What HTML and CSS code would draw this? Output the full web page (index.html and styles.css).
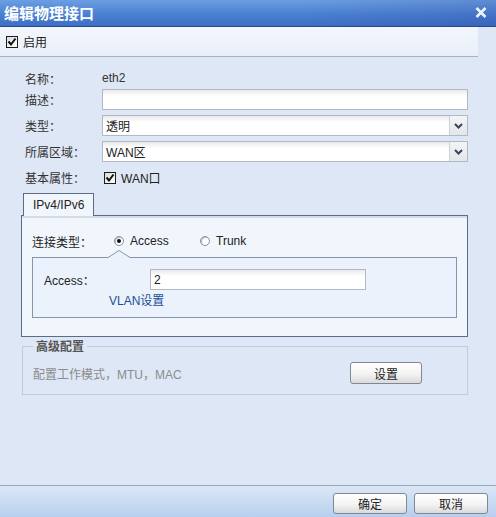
FILE: index.html
```html
<!DOCTYPE html>
<html lang="zh-CN">
<head>
    <meta charset="UTF-8">
    <title>编辑物理接口</title>
    <link rel="stylesheet" href="styles.css">
</head>
<body>

<div class="titlebar">
    <span class="title">编辑物理接口</span>
    <svg class="close" width="12" height="11" viewBox="0 0 12 11"><path d="M1.5 1 L10.5 10 M10.5 1 L1.5 10" stroke="#eef3fb" stroke-width="2.6"/></svg>
</div>

<div class="enable-bar">
    <label class="check">
        <span class="box"><svg width="10" height="10" viewBox="0 0 10 10"><path d="M1.5 4.5 L4 7.5 L8.5 1.5" stroke="#111" stroke-width="2" fill="none"/></svg></span>
        启用
    </label>
</div>

<div class="content">
    <div class="row row-name">
        <span class="label">名称：</span>
        <span class="value">eth2</span>
    </div>
    <div class="row">
        <span class="label">描述：</span>
        <div class="input"></div>
    </div>
    <div class="row">
        <span class="label">类型：</span>
        <div class="input select"><span class="text">透明</span><span class="arrow"><svg width="9" height="6" viewBox="0 0 9 6"><path d="M1 1 L4.5 4.5 L8 1" stroke="#38435e" stroke-width="2" fill="none"/></svg></span></div>
    </div>
    <div class="row">
        <span class="label">所属区域：</span>
        <div class="input select"><span class="text">WAN区</span><span class="arrow"><svg width="9" height="6" viewBox="0 0 9 6"><path d="M1 1 L4.5 4.5 L8 1" stroke="#38435e" stroke-width="2" fill="none"/></svg></span></div>
    </div>
    <div class="row">
        <span class="label">基本属性：</span>
        <label class="check">
            <span class="box"><svg width="10" height="10" viewBox="0 0 10 10"><path d="M1.5 4.5 L4 7.5 L8.5 1.5" stroke="#111" stroke-width="2" fill="none"/></svg></span>
            WAN口
        </label>
    </div>

    <div class="tabs">
        <div class="tab">IPv4/IPv6</div>
    </div>
    <div class="tab-panel">
        <div class="radio-row">
            <span class="radio-label">连接类型：</span>
            <span class="radio checked"><span class="dot"></span></span>
            <span class="radio-text">Access</span>
            <span class="radio"></span>
            <span class="radio-text">Trunk</span>
        </div>
        <div class="sub-box">
            <svg class="notch" width="22" height="8" viewBox="0 0 22 8"><path d="M0 8 L0 7.5 L11 0.5 L22 7.5 L22 8 Z" fill="#ebf2fc"/><path d="M0 7.5 L11 0.5 L22 7.5" stroke="#8595ad" fill="none"/></svg>
            <div class="sub-row">
                <span class="sub-label">Access：</span>
                <div class="input small">2</div>
            </div>
            <a class="link">VLAN设置</a>
        </div>
    </div>

    <fieldset class="advanced">
        <legend>高级配置</legend>
        <div class="adv-row">
            <span class="hint">配置工作模式，MTU，MAC</span>
            <button class="btn btn-set">设置</button>
        </div>
    </fieldset>
</div>

<div class="footer">
    <button class="btn">确定</button>
    <button class="btn">取消</button>
</div>

</body>
</html>
```

FILE: styles.css
```css
body {
    margin: 0;
    width: 496px;
    height: 517px;
    display: flex;
    flex-direction: column;
    background: #dee7f5;
    font-family: "Liberation Sans", "Noto Sans CJK SC", sans-serif;
    font-size: 12px;
    color: #333;
    overflow: hidden;
}
.titlebar {
    height: 26px;
    display: flex;
    align-items: center;
    justify-content: space-between;
    padding: 0 6px 0 4px;
    background: linear-gradient(90deg, rgba(255,255,255,0) 60%, rgba(40,50,140,0.18)), linear-gradient(#6b9fe2, #4a80d2 55%, #3c6fc4);
    border-bottom: 1px solid #27498c;
}
.title {
    color: #fff;
    font-family: "Noto Sans CJK SC", sans-serif;
    font-weight: bold;
    font-size: 15px;
    line-height: 18px;
}
.close {
    margin: -1px 3px 0 0;
}
.enable-bar {
    height: 29px;
    width: 472px;
    display: flex;
    align-items: center;
    padding-left: 6px;
    background: linear-gradient(#f3f6fc, #e9eff9);
    border-bottom: 1px solid #a6b2c6;
}
.check {
    display: flex;
    align-items: center;
    gap: 5px;
    color: #222;
}
.box {
    width: 10px;
    height: 10px;
    border: 1px solid #1d1d1d;
    background: linear-gradient(135deg, #dcdcd6, #fff);
    display: flex;
    align-items: center;
    justify-content: center;
}
.content {
    flex: 1;
    width: 447px;
    padding: 13px 0 0 21px;
}
.row {
    display: flex;
    align-items: center;
    height: 21px;
    margin-bottom: 5px;
}
.row-name {
    height: 16px;
    margin-bottom: 3px;
}
.label {
    width: 77px;
    padding-left: 4px;
    flex-shrink: 0;
    color: #333;
}
.value {
    color: #333;
}
.input {
    flex: 1;
    height: 19px;
    border: 1px solid #b3b9c3;
    background: linear-gradient(#e9e9e9, #fff 6px);
    display: flex;
    align-items: center;
    padding-left: 3px;
    color: #222;
}
.select {
    padding-left: 0;
}
.select .text {
    flex: 1;
    padding-left: 3px;
}
.arrow {
    width: 17px;
    height: 19px;
    border-left: 1px solid #ccd1d8;
    background: linear-gradient(#f3f4f6, #e3e6ea);
    display: flex;
    align-items: center;
    justify-content: center;
}
.row .check {
    margin-left: 2px;
}
.tabs {
    display: flex;
    padding-left: 2px;
}
.tab {
    position: relative;
    z-index: 1;
    height: 22px;
    line-height: 22px;
    padding: 0 9px;
    border: 1px solid #5b6c89;
    border-bottom: none;
    background: #f1f6fd;
    margin-bottom: -1px;
    color: #222;
}
.tab-panel {
    border: 1px solid #5b6c89;
    background: #f1f6fd;
    box-shadow: inset 0 2px 0 #d4dbe6;
    padding: 17px 10px 18px 10px;
}
.radio-row {
    display: flex;
    align-items: center;
    height: 16px;
}
.radio-label {
    width: 82px;
    color: #222;
}
.radio {
    width: 8px;
    height: 8px;
    border: 1px solid #8a8f96;
    border-radius: 50%;
    background: #fff;
    box-shadow: inset 1px 1px 1px #b8bcc2;
    display: flex;
    align-items: center;
    justify-content: center;
    margin-right: 6px;
}
.dot {
    width: 4px;
    height: 4px;
    border-radius: 50%;
    background: #111;
}
.radio-text {
    width: 70px;
    color: #222;
}
.sub-box {
    position: relative;
    margin-top: 8px;
    border: 1px solid #8595ad;
    background: #ebf2fc;
    padding: 11px 11px 8px 11px;
}
.notch {
    position: absolute;
    top: -8px;
    left: 75px;
}
.sub-row {
    display: flex;
    align-items: center;
    height: 21px;
}
.sub-label {
    width: 106px;
    color: #222;
}
.input.small {
    flex: none;
    width: 211px;
}
.link {
    display: block;
    margin: 3px 0 0 65px;
    line-height: 16px;
    color: #1c4f96;
}
.advanced {
    margin: 1px 0 0 1px;
    padding: 8px 10px 10px 10px;
    border: 1px solid #c3cbd8;
    min-width: 0;
}
.advanced legend {
    padding: 0 3px;
    font-weight: bold;
    color: #555;
    font-family: "Noto Sans CJK SC", sans-serif;
    line-height: 16px;
}
.adv-row {
    display: flex;
    align-items: center;
    justify-content: space-between;
    padding-right: 35px;
}
.hint {
    color: #8c8c8c;
}
.btn {
    width: 74px;
    height: 21px;
    border: 1px solid #7f8896;
    border-radius: 3px;
    background: linear-gradient(#fff, #f3f3f3 55%, #dadada);
    font-family: "Noto Sans CJK SC", sans-serif;
    font-size: 12px;
    color: #222;
    padding: 0;
}
.btn-set {
    width: 72px;
    height: 22px;
}
.footer {
    height: 32px;
    box-sizing: border-box;
    border-top: 1px solid #9aa7bb;
    background: linear-gradient(#dbe7f6, #b8cfee);
    display: flex;
    justify-content: flex-end;
    align-items: flex-start;
    gap: 7px;
    padding: 7px 8px 0 0;
}
```
